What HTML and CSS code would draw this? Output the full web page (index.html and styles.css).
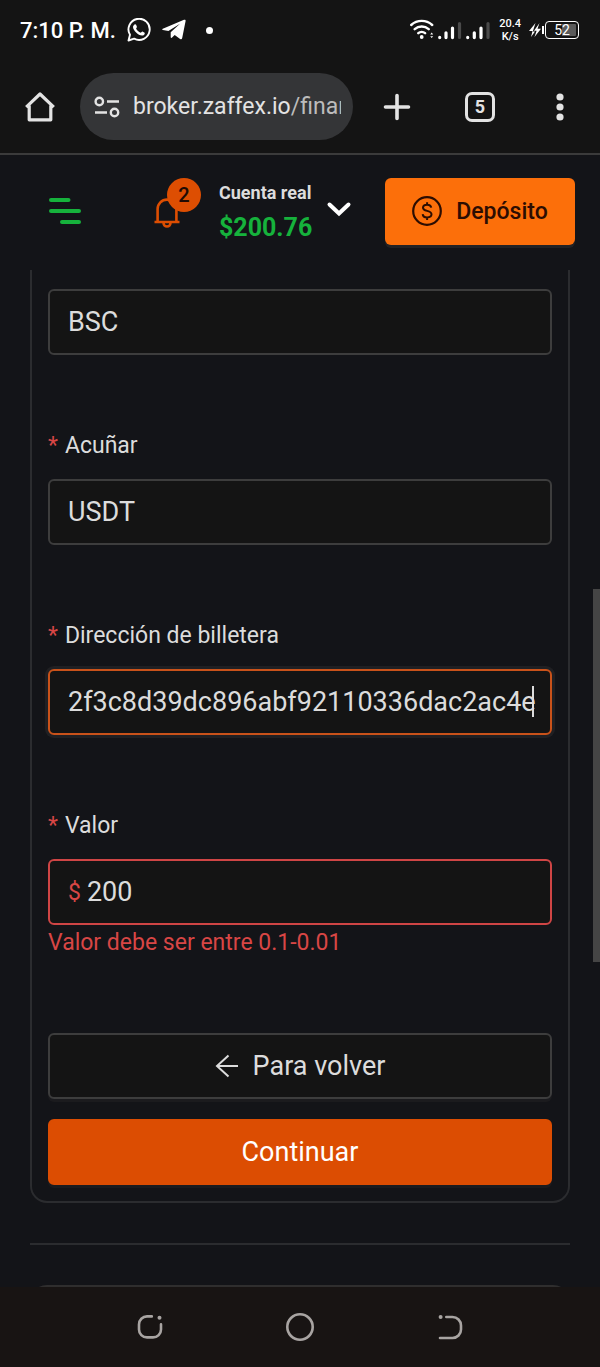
FILE: index.html
```html
<!DOCTYPE html>
<html lang="es">
<head>
<meta charset="utf-8">
<meta name="viewport" content="width=device-width, initial-scale=1">
<title>Retiro</title>
<link rel="stylesheet" href="styles.css">
</head>
<body>
<div class="status">
  <span class="status-time">7:10 P. M.</span>
  <svg class="status-app" width="24" height="24" viewBox="0 0 24 24" fill="none" stroke="#fff"><path d="M1.500 22.500l1.500-5.700a10.600 10.600 0 1 1 4.100 3.900z" stroke-width="1.900" stroke-linejoin="round"/><path d="M7.300 6.700c.5-.6 1.500-.6 1.800.1l.8 1.900c.2.500-.8 1.400-.8 1.700 1 2 2.500 3.500 4.600 4.400.5.100 1.300-1.400 1.800-1.200l2.100 1.100c.5.300-.1 2-1 2.500-3.700 1.900-10.400-4-10.600-8.100 0-.9.600-1.700 1.300-2.400z" fill="#fff" stroke="none"/></svg>
  <svg class="status-app" width="24" height="22" viewBox="0 0 24 22" fill="#fff"><path d="M.8 9.700L22 .8c1-.4 1.800.1 1.600 1.300L20.200 19c-.3 1.300-1 1.600-2.100 1l-5.400-4-2.600 2.500c-.7.700-1.400.4-1.400-.6V13.200L18 4.800 6.400 12 .9 10.900c-.9-.3-.9-.9-.1-1.200z"/></svg>
  <span class="status-dot"></span>
  <div class="status-right">
    <svg width="81" height="22" viewBox="0 0 81 22" fill="none" stroke="#fff" stroke-linecap="round"><g stroke-width="2.400"><path d="M1.200 6a15.500 15.500 0 0 1 21 0M4.700 10.200a10.500 10.500 0 0 1 14 0M8.300 14.200a5 5 0 0 1 6.800 0"/></g><circle cx="11.700" cy="18" r="1.900" fill="#fff" stroke="none"/><path d="M20.200 15.400l1.500-1.800 1.500 1.800zM20.200 17.200l1.500 1.800 1.500-1.800z" fill="#fff" stroke="none"/><g stroke-width="3.200"><path d="M29.700 18.400v.2M36 13.800v4.800M42.500 9v9.600M57.700 18.400v.2M64.300 13.800v4.800M71 9v9.600"/><path d="M49.500 4.500v14M78 4.500v14" stroke="#4a4a4a"/></g></svg>
    <span class="net-speed">20.4<br>K/s</span>
    <svg class="bolt" width="12" height="16" viewBox="0 0 12 16" fill="#fff"><path d="M6.500 1L0 9h3.500L2 15l4-5.500H3.800zM10.500 1L5 8.800h2.600L5.500 15 12 6.800H8.500z"/></svg>
    <span class="battery">52</span>
  </div>
</div>

<div class="toolbar">
  <button class="tool" aria-label="Inicio"><svg width="32" height="32" viewBox="0 0 32 32" fill="none" stroke="#e3e3e3" stroke-width="3.200" stroke-linejoin="round"><path d="M5.200 14.500v14.300h21.600V14.500M2.200 16.200L16 3l13.800 13.200"/></svg></button>
  <button class="address">
    <svg width="26" height="22" viewBox="0 0 26 22" fill="none" stroke="#e3e3e3" stroke-width="2.400"><circle cx="5.300" cy="5.500" r="3.700"/><path d="M13 5.500h12M1 16.500h12"/><circle cx="20.500" cy="16.500" r="3.700"/></svg>
    <span class="url">broker.zaffex.io<span class="url-path">/finan</span></span>
  </button>
  <button class="tool tool-new" aria-label="Nueva pestaña"><svg width="28" height="28" viewBox="0 0 28 28" stroke="#e3e3e3" stroke-width="3.600" stroke-linecap="round"><path d="M14 2.500v23M2.500 14h23"/></svg></button>
  <button class="tool" aria-label="Pestañas"><span class="tabs">5</span></button>
  <button class="tool" aria-label="Más opciones"><svg width="8" height="28" viewBox="0 0 8 28" fill="#e3e3e3"><circle cx="4" cy="4" r="3.600"/><circle cx="4" cy="14" r="3.600"/><circle cx="4" cy="24" r="3.600"/></svg></button>
</div>

<header class="header">
  <button class="plain" aria-label="Menú"><svg width="34" height="28" viewBox="0 0 34 28" stroke="#16b23c" stroke-width="4" stroke-linecap="round"><path d="M3 3h17.500M3 14h28M14 25h17"/></svg></button>
  <button class="plain bell" aria-label="Notificaciones"><svg width="26" height="34" viewBox="0 0 26 34" fill="none" stroke="#dd4e02" stroke-width="2.600"><path d="M.5 28h25M3.600 28V15a9.400 9.400 0 0 1 18.800 0v13M9.500 29a3.500 3.500 0 0 0 7 0"/></svg><span class="badge">2</span></button>
  <button class="plain account">
    <span class="account-text"><span class="account-name">Cuenta real</span><span class="account-sum">$200.76</span></span>
    <svg class="chevron" width="26" height="18" viewBox="0 0 26 18" fill="none" stroke="#fff" stroke-width="4" stroke-linecap="round"><path d="M3.500 4.500L13 13.500l9.500-9"/></svg>
  </button>
  <button class="deposit"><svg width="30" height="30" viewBox="0 0 30 30" fill="none" stroke="#2c0d02"><circle cx="15" cy="15" r="13.800" stroke-width="2.200"/><path d="M19.200 11.700c-.2-1.800-1.700-3-4.100-3-2.500 0-4.100 1.200-4.100 3 0 4.300 8.500 2 8.500 6.600 0 1.900-1.700 3.100-4.300 3.100s-4.400-1.300-4.500-3.300M15.100 6.200v3M15.100 21v3" stroke-width="2"/></svg>Depósito</button>
</header>

<main class="content">
  <form class="card">
    <div class="field"><input class="box" aria-label="Red" value="BSC"></div>
    <div class="field"><label class="label" for="coin">Acuñar</label><input class="box" id="coin" value="USDT"></div>
    <div class="field"><label class="label" for="wallet">Dirección de billetera</label><div class="wallet"><input class="box box-active" id="wallet" value="2f3c8d39dc896abf92110336dac2ac4e"><span class="caret"></span></div></div>
    <div class="field"><label class="label" for="amount">Valor</label><div class="box amount"><span class="currency">$</span><input class="amount-input" id="amount" value="200"></div><p class="error">Valor debe ser entre 0.1-0.01</p></div>
    <div class="actions">
      <button class="btn" type="button"><svg width="24" height="24" viewBox="0 0 24 24" fill="none" stroke="#dcdcdc" stroke-width="2"><path d="M23 12H2M13.500 1.500L2 12l11.500 10.500"/></svg>Para volver</button>
      <button class="btn btn-primary" type="button">Continuar</button>
    </div>
  </form>
  <hr class="divider">
  <div class="peek"><div class="peek-card"></div></div>
  <span class="scrollbar"></span>
</main>

<nav class="nav">
  <button class="plain" aria-label="Recientes"><svg width="28" height="28" viewBox="0 0 28 28" fill="none" stroke="#a8a4a2" stroke-width="2.600" stroke-linecap="round"><path d="M15.800 3.400H11a8 8 0 0 0-8 8v5a8 8 0 0 0 8 8h6a8 8 0 0 0 8-8v-5"/><circle cx="23.500" cy="4.800" r="2" fill="#a8a4a2" stroke="none"/></svg></button>
  <button class="plain" aria-label="Inicio"><svg width="28" height="28" viewBox="0 0 28 28" fill="none" stroke="#a8a4a2" stroke-width="2.600"><circle cx="14" cy="14" r="12.700"/></svg></button>
  <button class="plain" aria-label="Atrás"><svg width="28" height="28" viewBox="0 0 28 28" fill="none" stroke="#a8a4a2" stroke-width="2.600" stroke-linecap="round"><path d="M10.300 4h6.200a8.500 8.500 0 0 1 8.500 8.500v4a8.500 8.500 0 0 1-8.500 8.500H4"/><circle cx="4.600" cy="4" r="2" fill="#a8a4a2" stroke="none"/></svg></button>
</nav>
</body>
</html>
```
FILE: styles.css
```css
* { box-sizing: border-box; }
body {
  margin: 0;
  min-height: 100vh;
  display: flex;
  flex-direction: column;
  background: #131418;
  color: #dcdcdc;
  font-family: Roboto, "Liberation Sans", sans-serif;
}
button, input { font: inherit; color: inherit; }
button { border: 0; padding: 0; background: none; }
input { outline: 0; }
svg { display: block; flex: none; }

.status {
  display: flex;
  align-items: center;
  height: 60px;
  padding: 0 21px 0 20px;
  background: #141414;
  color: #fff;
}
.status-time { font-size: 22px; font-weight: 500; white-space: nowrap; }
.status-app { margin-left: 11px; }
.status-dot { width: 7px; height: 7px; margin-left: 20px; border-radius: 50%; background: #fff; }
.status-right { display: flex; align-items: center; margin-left: auto; }
.net-speed { margin: 0 8px; font-size: 11px; line-height: 13px; font-weight: 500; text-align: center; }
.bolt { margin-right: 4px; }
.battery {
  position: relative;
  width: 34px;
  height: 18px;
  border: 1px solid #fff;
  border-radius: 4px;
  background: linear-gradient(90deg, #141414 50%, #5a5a5a 50%) content-box;
  padding: 2px;
  font-size: 14px;
  line-height: 13px;
  text-align: center;
}
.battery::before {
  content: "";
  position: absolute;
  left: -4px;
  top: 4px;
  width: 2px;
  height: 8px;
  background: #fff;
}

.toolbar {
  display: flex;
  align-items: center;
  padding: 13px 0;
  border-bottom: 2px solid #3b3b3b;
  background: #141414;
}
.tool { display: flex; align-items: center; justify-content: center; flex: none; width: 80px; height: 67px; }
.tool-new { width: 87px; }
.address {
  display: flex;
  align-items: center;
  gap: 13px;
  flex: 1;
  min-width: 0;
  height: 67px;
  padding: 0 12px 0 14px;
  border-radius: 34px;
  background: #343537;
}
.url { flex: 1; overflow: hidden; font-size: 23px; line-height: 32px; color: #e3e3e3; text-align: left; white-space: nowrap; }
.url-path { color: #bcbcbc; }
.tabs {
  width: 30px;
  height: 30px;
  border: 3px solid #e3e3e3;
  border-radius: 7px;
  color: #e3e3e3;
  font-size: 18px;
  line-height: 24px;
  font-weight: 700;
  text-align: center;
}

.header { display: flex; align-items: center; padding: 21px 25px 24px 48px; }
.bell { position: relative; margin-left: 72px; }
.badge {
  position: absolute;
  left: 13px;
  top: -16px;
  width: 34px;
  height: 34px;
  border-radius: 50%;
  background: #dd4e02;
  color: #200b04;
  font-size: 20px;
  line-height: 34px;
  font-weight: 500;
}
.account { display: flex; align-items: center; gap: 14px; margin-left: 39px; text-align: left; }
.account-text { display: flex; flex-direction: column; white-space: nowrap; font-weight: 700; }
.account-name { font-size: 18px; line-height: 34px; }
.account-sum { font-size: 25px; line-height: 36px; color: #16b23c; }
.chevron { margin-bottom: 4px; }
.deposit {
  display: flex;
  align-items: center;
  justify-content: center;
  gap: 14px;
  width: 190px;
  height: 67px;
  margin-left: auto;
  border-radius: 6px;
  background: #fc6f0a;
  box-shadow: 0 3px 0 #222224;
  color: #2c0d02;
  font-size: 23px;
  font-weight: 500;
}

.content { position: relative; padding: 0 30px; }
.card {
  padding: 19px 16px 16px;
  border: 2px solid #2b2c2f;
  border-top: 0;
  border-radius: 0 0 17px 17px;
}
.field { margin-bottom: 73px; }
.label { display: block; margin-bottom: 15px; font-size: 23px; line-height: 36px; }
.label::before { content: "*"; margin-right: 7px; color: #d84645; }
.box {
  display: block;
  width: 100%;
  height: 66px;
  padding: 0 18px;
  border: 2px solid #3d3d3d;
  border-radius: 6px;
  background: #141414;
  font-size: 27px;
}
.box-active { border-color: #c9521a; box-shadow: 0 0 0 3px #202023; padding: 0 14px 0 18px; }
.wallet { position: relative; }
.caret { position: absolute; right: 18px; top: 17px; width: 2px; height: 31px; background: #dcdcdc; }
.amount { display: flex; align-items: center; gap: 6px; border-color: #cf4545; }
.currency { color: #d84645; font-size: 23px; }
.amount-input { flex: 1; min-width: 0; padding: 0; border: 0; background: none; }
.error { margin: 0; color: #d84645; font-size: 23px; line-height: 35px; }
.actions { display: grid; gap: 20px; }
.btn {
  display: flex;
  align-items: center;
  justify-content: center;
  gap: 14px;
  height: 66px;
  border: 2px solid #3d3d3d;
  border-radius: 6px;
  background: #141414;
  box-shadow: 0 3px 0 #1b1b1e;
  font-size: 27px;
}
.btn-primary { border-color: #dc4d02; background: #dc4d02; color: #fff; }
.divider { margin: 40px 0; height: 2px; border: 0; background: #2b2c2f; }
.peek { height: 2px; overflow: hidden; }
.peek-card { height: 40px; border: 2px solid #2f2e2e; border-radius: 17px; }
.scrollbar { position: absolute; right: 0; top: 319px; width: 7px; height: 373px; background: #454545; }

.nav {
  display: flex;
  flex: 1;
  align-items: center;
  justify-content: center;
  gap: 122px;
  min-height: 79px;
  background: #181413;
}
```
